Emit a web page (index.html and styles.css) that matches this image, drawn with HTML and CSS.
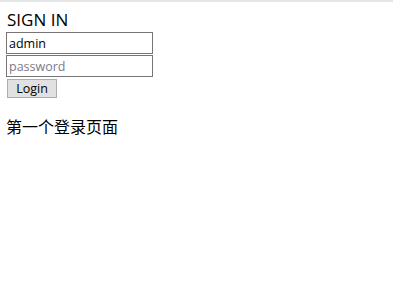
FILE: index.html
```html
<!DOCTYPE html>
<html>
<head>
<meta charset="utf-8">
<link rel="stylesheet" href="styles.css">
</head>
<body>
<div class="page">
  <form class="login">
    <div class="title">SIGN IN</div>
    <input class="field" type="text" value="admin">
    <input class="field field-pass" type="password" placeholder="password">
    <button class="btn" type="button">Login</button>
  </form>
  <p class="note">第一个登录页面</p>
</div>
</body>
</html>
```
FILE: styles.css
```css
html, body {
  margin: 0;
  padding: 0;
  background: #fff;
}
body {
  border-top: 2px solid #e6e6e6;
  font-family: "Open Sans", "Noto Sans CJK SC", sans-serif;
  color: #000;
}
.page {
  padding: 6px 6px;
}
.login {
  display: flex;
  flex-direction: column;
  align-items: flex-start;
}
.title {
  font-size: 17px;
  line-height: 24px;
  padding-left: 1px;
}
.field {
  box-sizing: border-box;
  width: 147px;
  height: 22px;
  margin: 0;
  border: 1px solid #767676;
  padding: 0 2px;
  font-family: "Open Sans", sans-serif;
  font-size: 12.5px;
  color: #000;
  outline: none;
}
.field-pass {
  margin-top: 1px;
}
.field::placeholder {
  color: #7d7a86;
}
.btn {
  box-sizing: border-box;
  margin: 2px 0 0 1px;
  width: 50px;
  height: 19px;
  background: #e1e1e1;
  border: 1px solid #adadad;
  padding: 0;
  font-family: "Open Sans", sans-serif;
  font-size: 12.5px;
  line-height: 17px;
  color: #000;
}
.note {
  margin: 18px 0 0 0;
  font-family: "Noto Sans CJK SC", sans-serif;
  font-size: 16px;
  line-height: 20px;
}
```
